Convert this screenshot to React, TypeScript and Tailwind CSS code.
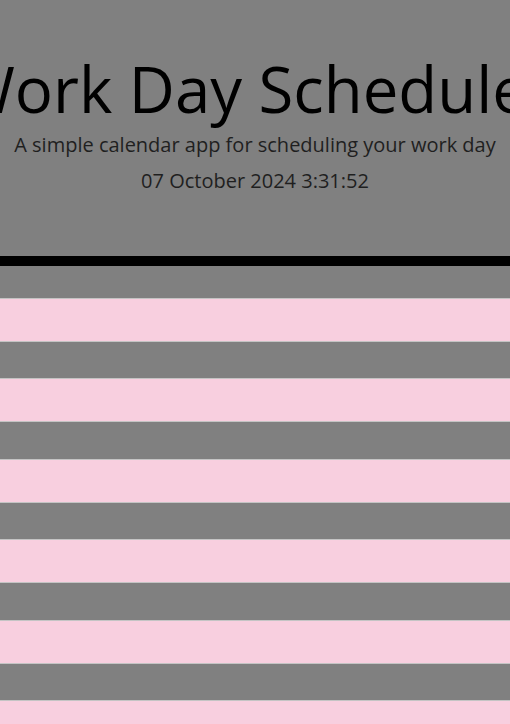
const ROWS = [0, 1, 2, 3, 4, 5];

function Band() {
  return (
    <>
      <div className="h-[44px] border-y border-[#c4c4c4] bg-[#f8cfdf]" />
      <div className="h-[36.4px] bg-[#808080]" />
    </>
  );
}

export default function App() {
  return (
    <div className="w-full h-[724px] overflow-hidden bg-[#808080]" style={{ fontFamily: '"Open Sans", "Noto Sans", sans-serif' }}>
      <header className="h-[266px] border-b-[10px] border-black flex flex-col items-center overflow-hidden">
        <div className="w-full flex justify-center mt-[53px]">
          <h1 className="whitespace-nowrap text-[63.5px] leading-[72px] text-black">Work Day Scheduler</h1>
        </div>
        <p className="mt-[5px] text-[20px] leading-[30px] text-[#1f1f1f] whitespace-nowrap">
          A simple calendar app for scheduling your work day
        </p>
        <p className="mt-[6px] text-[20px] leading-[30px] text-[#1f1f1f]">07 October 2024 3:31:52</p>
      </header>
      <div className="h-[32px]" />
      {ROWS.map(i => <Band key={i} />)}
    </div>
  );
}
